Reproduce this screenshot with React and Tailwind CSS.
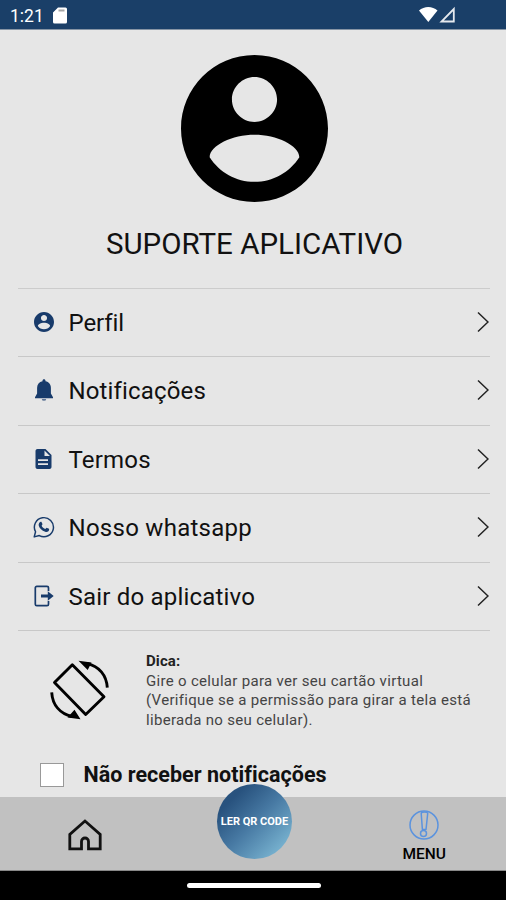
import React, { useState } from 'react';

const AccountIcon = ({ className }) => (
  <svg viewBox="2 2 20 20" fill="currentColor" className={className}>
    <path d="M12 2C6.48 2 2 6.48 2 12s4.48 10 10 10 10-4.48 10-10S17.52 2 12 2zm0 3c1.66 0 3.07 1.38 3.07 3.05S13.66 11.1 12 11.1 8.93 9.72 8.93 8.05 10.34 5 12 5zm0 14.25c-2.5 0-4.78-1.3-6.1-3.35.03-1.6 3.1-3.05 6.1-3.05s6.07 1.45 6.1 3.05c-1.32 2.05-3.6 3.35-6.1 3.35z" />
  </svg>
);

const BellIcon = ({ className }) => (
  <svg viewBox="0 0 20 22" fill="currentColor" className={className}>
    <path d="M10 .3c.9 0 1.5.6 1.5 1.500v.5c3.400.7 5.400 3.300 5.400 6.500v5.800L19 18.200v1H1v-1l2.100-3.600V8.800c0-3.200 2-5.800 5.400-6.500v-.5C8.500.9 9.100.3 10 .3z" />
    <path d="M7.800 19.900h4.400a2.200 1.900 0 0 1-4.400 0z" opacity=".65" />
  </svg>
);

const DocumentIcon = ({ className }) => (
  <svg viewBox="4 2 16 20" fill="currentColor" className={className}>
    <path d="M14 2H6c-1.100 0-2 .9-2 2v16c0 1.100.9 2 2 2h12c1.100 0 2-.9 2-2V8l-6-6zm2.500 16h-10v-1.700h10V18zm0-4h-10v-1.700h10V14zM13 9V3.500L18.500 9H13z" />
  </svg>
);

const WhatsappIcon = ({ className }) => (
  <svg viewBox="0 0 24 24" fill="none" className={className}>
    <path
      d="M1.300 22.800l1.500-5.600A10.400 10.400 0 1 1 6.900 21.300z"
      stroke="currentColor"
      strokeWidth="1.600"
      strokeLinejoin="round"
    />
    <path
      d="M8.400 6.200c.4-.1.8 0 1 .5l.9 2.100c.1.300 0 .6-.9 1.700.9 1.800 2.200 3 4.100 3.800.7-.7 1-1.300 1.300-1.400.3-.1 2.300.9 2.700 1.200.3.300 0 1.700-.7 2.400-.9.900-2.200 1-3.500.6-3.700-1.200-6-3.500-7-6.500-.6-1.900.7-4.100 2.100-4.400z"
      fill="currentColor"
    />
  </svg>
);

const ExitIcon = ({ className }) => (
  <svg viewBox="0 0 20 22" fill="none" className={className}>
    <path
      d="M14.500 6V2.800A1.500 1.500 0 0 0 13 1.300H2.800A1.500 1.500 0 0 0 1.300 2.800v16.400a1.500 1.500 0 0 0 1.500 1.500H13a1.500 1.500 0 0 0 1.500-1.500V16"
      stroke="currentColor"
      strokeWidth="1.700"
    />
    <path d="M7 9.500h6.800V6.300l5.900 4.700-5.900 4.700v-3.200H7z" fill="currentColor" />
  </svg>
);

const ChevronIcon = () => (
  <svg viewBox="0 0 12 22" fill="none" className="h-[22px] w-3">
    <path d="M1 1.500L11 11 1 20.500" stroke="#222" strokeWidth="1.500" />
  </svg>
);

const RotateIcon = () => (
  <svg viewBox="0 0 64 64" fill="none" className="size-16" stroke="#000" strokeWidth="2.900">
    <path d="M24.300 6.700L6.500 24.500l31.200 32L56 38.700z" strokeLinejoin="round" />
    <path d="M59.300 29.700C58.500 17 51 8.500 39 5.500M3.700 34.300C4.500 47 12 55.500 24 58.500" />
    <path
      d="M30.500 2.800l13 1.700-3.800 7.500zM32.500 61.200l-13-1.700 7-7.800z"
      fill="#000"
      stroke="none"
    />
  </svg>
);

const HomeIcon = () => (
  <svg viewBox="0 0 34 32" fill="none" className="h-8 w-[34px]">
    <path
      d="M17 2L1.800 15.500v14.300h11.700V22.500a3.500 3.500 0 0 1 7 0v7.300h11.700V15.500z"
      stroke="#111"
      strokeWidth="2.800"
    />
  </svg>
);

const AlertIcon = () => (
  <svg viewBox="0 0 30 30" fill="none" stroke="#5b93de" className="size-[30px]">
    <circle cx="15" cy="15" r="14" strokeWidth="1.500" />
    <path
      d="M12.200 3.500c0-2 6.600-2 6.500 0l-1.700 16h-3.600z"
      strokeWidth="1.500"
      strokeLinejoin="round"
    />
    <circle cx="14.500" cy="23.500" r="3" strokeWidth="1.500" />
  </svg>
);

const menuItems = [
  { label: 'Perfil', icon: AccountIcon, size: 'size-5', text: 'tracking-[-0.1px]' },
  { label: 'Notificações', icon: BellIcon, size: 'h-[22px] w-5', text: 'tracking-[0.15px]' },
  { label: 'Termos', icon: DocumentIcon, size: 'h-5 w-[17px]', text: 'tracking-[0.2px]' },
  { label: 'Nosso whatsapp', icon: WhatsappIcon, size: 'size-[22px]', text: 'tracking-[0.27px]' },
  { label: 'Sair do aplicativo', icon: ExitIcon, size: 'h-[22px] w-5', text: 'tracking-[0.2px]' },
];

const StatusBar = () => (
  <div className="flex h-[30px] shrink-0 items-center border-b border-[#8795a5] bg-[#1a3f68] pl-2.5 pr-[50px] text-white">
    <span className="w-[43px] pt-[4px] text-[17.500px] leading-none">1:21</span>
    <svg viewBox="0 0 14 17" className="mt-0.5 h-[17px] w-3.5" fill="#fff">
      <path d="M5 .5h7.500a1.500 1.500 0 0 1 1.500 1.500v13a1.500 1.500 0 0 1-1.500 1.500H1.500A1.500 1.500 0 0 1 0 15V5.500z" />
      <path d="M5.500 2.500h6v2h-6z" fill="#a6a6a6" />
    </svg>
    <svg viewBox="0 0 37 17" className="ml-auto h-[17px] w-[37px]">
      <path d="M0 4.500C5-.3 13.500-.3 18.500 4.500L9.300 16z" fill="#fff" />
      <path d="M34.800 3v12.500H22.500z" fill="none" stroke="#e5e9ee" strokeWidth="1.800" />
    </svg>
  </div>
);

const App = () => {
  const [muted, setMuted] = useState(false);

  return (
    <div className="flex h-[900px] w-[506px] flex-col overflow-hidden bg-[#e6e6e6] font-['Roboto',sans-serif] text-[#111]">
      <StatusBar />

      <main className="flex h-[767px] shrink-0 flex-col">
        <div className="flex h-[257.5px] shrink-0 flex-col items-center pl-[3px] pt-[24.5px]">
          <AccountIcon className="size-[147px] text-black" />
          <h1 className="mt-[22.5px] whitespace-nowrap text-[29.500px] font-normal leading-10">
            SUPORTE APLICATIVO
          </h1>
        </div>

        <ul className="ml-[18px] mr-4 border-t border-[#cccccc]">
          {menuItems.map(({ label, icon: Icon, size, text }) => (
            <li
              key={label}
              className="flex h-[68.5px] items-center border-b-[1.5px] border-[#c8c8c8] pb-[1.5px] pl-3.5 pr-px"
            >
              <span className="flex w-[23px] justify-center text-[#183b6b]">
                <Icon className={size} />
              </span>
              <span className={`ml-[13.5px] flex-1 pt-[2px] text-[24px] leading-none ${text}`}>
                {label}
              </span>
              <ChevronIcon />
            </li>
          ))}
        </ul>

        {/* Dica */}
        <div className="flex items-start pl-12 pt-[20px]">
          <div className="pt-[7px]">
            <RotateIcon />
          </div>
          <div className="ml-[34px] whitespace-nowrap pt-px text-[15px] leading-[19.700px] tracking-[0.31px] text-[#444]">
            <p className="font-bold tracking-[0.1px] text-[#222]">Dica:</p>
            <p>Gire o celular para ver seu cartão virtual</p>
            <p>(Verifique se a permissão para girar a tela está</p>
            <p>liberada no seu celular).</p>
          </div>
        </div>

        <label className="mt-[32.5px] flex items-center pl-10">
          <input
            type="checkbox"
            checked={muted}
            onChange={(e) => setMuted(e.target.checked)}
            className="size-6 appearance-none border border-[#999] bg-white checked:bg-[#1a3f68]"
          />
          <span className="ml-[19.5px] whitespace-nowrap text-[21.500px] font-bold leading-6 tracking-[0.03px]">
            Não receber notificações
          </span>
        </label>
      </main>

      {/* Barra inferior */}
      <nav className="relative flex h-[74px] shrink-0 justify-between border-b border-[#888] bg-[#c1c1c1] pl-[68px] pr-[60px]">
        <div className="pt-[22px]">
          <HomeIcon />
        </div>
        <button
          type="button"
          className="absolute -top-[13px] left-[217px] size-[75px] whitespace-nowrap rounded-full bg-linear-to-br from-[#28527e] from-20% via-[#4779a3] to-[#75afcd] to-85% pt-0.5 text-center text-[11px] font-bold text-white"
        >
          LER QR CODE
        </button>
        <div className="flex flex-col items-center pt-[13px]">
          <AlertIcon />
          <span className="mt-[5px] text-[15.500px] font-medium leading-[18px] text-black">
            MENU
          </span>
        </div>
      </nav>

      <div className="flex flex-1 justify-center bg-black pl-px pt-3">
        <div className="h-[5px] w-[134px] rounded-full bg-white" />
      </div>
    </div>
  );
};

export default App;
